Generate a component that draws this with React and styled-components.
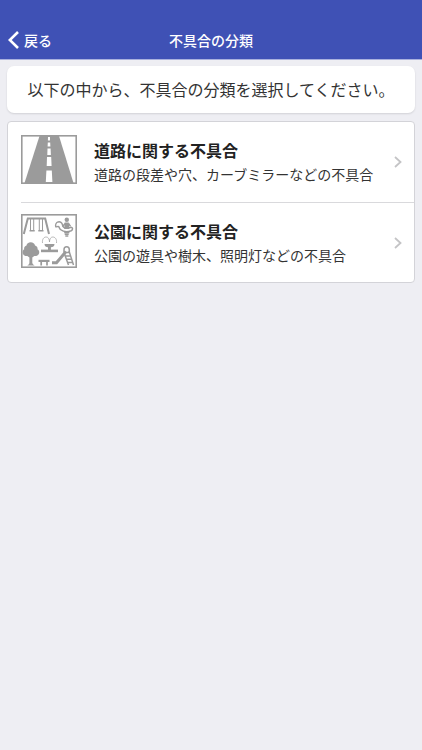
import React from 'react'
import styled, { createGlobalStyle } from 'styled-components'

const GlobalStyle = createGlobalStyle`
  * {
    box-sizing: border-box;
  }
  body {
    margin: 0;
    background: #eeeef3;
    color: #333;
    font-family: 'Noto Sans CJK JP', sans-serif;
  }
`

const categories = [
  {
    id: 'road',
    title: '道路に関する不具合',
    text: '道路の段差や穴、カーブミラーなどの不具合',
    icon: RoadIcon,
  },
  {
    id: 'park',
    title: '公園に関する不具合',
    text: '公園の遊具や樹木、照明灯などの不具合',
    icon: ParkIcon,
  },
]

function App() {
  return (
    <>
      <GlobalStyle />
      <Header>
        <BackButton type="button">
          <svg width="12" height="18" viewBox="0 0 12 18" fill="none" stroke="#fff" strokeWidth="2.6">
            <path d="M10 1 1.800 9l8.200 8" />
          </svg>
          戻る
        </BackButton>
        <HeaderTitle>不具合の分類</HeaderTitle>
      </Header>
      <Main>
        <Message>以下の中から、不具合の分類を選択してください。</Message>
        <List>
          {categories.map(({ id, title, text, icon: Icon }) => (
            <Item key={id}>
              <ItemLink href={`#${id}`}>
                <ItemIcon>
                  <Icon />
                </ItemIcon>
                <ItemBody>
                  <ItemTitle>{title}</ItemTitle>
                  <ItemText>{text}</ItemText>
                </ItemBody>
                <svg width="8" height="12" viewBox="0 0 8 12" fill="none" stroke="#c4c4c6" strokeWidth="1.8">
                  <path d="M1 1l5.5 5L1 11" />
                </svg>
              </ItemLink>
            </Item>
          ))}
        </List>
      </Main>
    </>
  )
}

function RoadIcon() {
  return (
    <svg width="56" height="49" viewBox="0 0 56 49">
      <rect x="0.8" y="0.8" width="54.4" height="47.4" fill="#fff" stroke="#9b9b9b" strokeWidth="1.6" />
      <path d="M18.5 1H38L52.500 48H3.500z" fill="#9b9b9b" />
      <path
        d="M27 2h2v3.500h-2.100zM26.800 7.500h2.400l.2 4H26.600zM26.500 13.500h3.100l.3 6.500h-3.600zM26 22h4.200l.4 9h-4.900zM25.400 35.500h5.400l.6 11.500h-6.600z"
        fill="#fff"
      />
    </svg>
  )
}

function ParkIcon() {
  return (
    <svg width="56" height="54" viewBox="0 0 56 54" fill="none" stroke="#9b9b9b">
      <rect x="0.8" y="0.8" width="54.4" height="52.4" fill="#fff" strokeWidth="1.6" />
      {/* swings */}
      <path d="M2.800 20 6.800 4.500h17.400L28 20" strokeWidth="2" />
      <path d="M9.500 5v11.500M12.700 5v11.500M18.300 5v11.500M21.500 5v11.500" strokeWidth="1" />
      <path d="M8.500 16.700h5.200M17.300 16.700h5.200" strokeWidth="1.6" />
      {/* spring rider */}
      <circle cx="45.800" cy="5.700" r="2.200" fill="#9b9b9b" stroke="none" />
      <path d="M43.600 8.600h4.200l.5 6.400h-5z" fill="#9b9b9b" stroke="none" />
      <path d="M44.300 9.400l-2.800 3M47.500 9.400l2 3" strokeWidth="1.500" />
      <path
        d="M34.800 12.800c-.6-2 .4-4.300 2.400-4.900 2-.5 3.900.8 4.200 2.800.3 2.300 2 3.500 4.200 3.500l4-.8c2.300-.4 2.600 2.500.6 3.400-3.500 1.400-8 1-10.800-1.300-1.200-1-1-2.600-2-3-.8-.4-1.600.7-2.600.3z"
        strokeWidth="1.500"
      />
      <path d="M43.200 18.400h5.200M43.700 20.200h4M44.300 22h3" strokeWidth="1.500" />
      {/* fountain */}
      <path d="M21.500 29c-.5-4 1.500-6 3.700-6 2 0 3.300 2 3.300 5 0-3 1.300-5 3.300-5 2.200 0 4.200 2 3.700 6" strokeWidth="0.7" />
      <path d="M23.500 30h10c0 2.200-1.700 3.200-3.600 3.200v3H27v-3c-2 0-3.500-1-3.500-3.200z" fill="#9b9b9b" stroke="none" />
      <path d="M20 36.900h17" strokeWidth="2.600" />
      {/* tree */}
      <path
        d="M9.700 28.300c2.300 0 3.900 1.300 4.300 3.100 2 .5 2.900 2.100 2.500 3.800 1.700 1 2.200 3 1.300 4.800-.8 1.600-2.700 2.300-4.500 2l-2 1.500v5.600c.4 1.200 1.300 1.900 2.400 2.400H6.200c1.200-.5 2-1.200 2.200-2.400v-5.600L6.300 42c-1.800.3-3.500-.4-4.300-2-.8-1.800-.3-3.800 1.200-4.800-.4-1.700.5-3.300 2.300-3.800.4-1.800 1.900-3.100 4.200-3.100z"
        fill="#9b9b9b"
        stroke="none"
      />
      {/* bench */}
      <path d="M17.500 46.900h11" strokeWidth="2.200" />
      <path d="M20.200 47v4.500M26 47v4.500" strokeWidth="1.700" />
      {/* slide */}
      <path d="M31 48.800h4.500L45 37.500" strokeWidth="3" />
      <path d="M43 38.500v-2.800c0-3.800 5.300-3.800 5.300 0v2.800" strokeWidth="1.500" />
      <path d="M48 37 52.500 51M43.500 40 47.500 51" strokeWidth="1.500" />
      <path d="M43 38.500h5.500M44.500 42h5M45.700 45.200h5M46.700 48.400h5" strokeWidth="1.500" />
    </svg>
  )
}

const Header = styled.header`
  display: grid;
  grid-template-columns: 1fr auto 1fr;
  align-items: center;
  padding: 22px 8px 2px;
  height: 60px;
  background: #3f51b5;
  border-bottom: 1px solid #a9b1de;
  color: #fff;
`

const BackButton = styled.button`
  display: flex;
  align-items: center;
  justify-self: start;
  gap: 4px;
  padding: 0;
  border: 0;
  background: none;
  color: inherit;
  font-family: inherit;
  font-size: 14px;
  font-weight: 500;
  line-height: 20px;
  cursor: pointer;
`

const HeaderTitle = styled.h1`
  margin: 0;
  font-size: 14px;
  font-weight: 500;
  line-height: 20px;
`

const Main = styled.main`
  display: flex;
  flex-direction: column;
  gap: 8px;
  padding: 6px 7px;
`

const Message = styled.p`
  margin: 0;
  padding: 11px 8px 12px;
  border-radius: 7px;
  background: #fff;
  box-shadow: 0 1px 2px rgba(0, 0, 0, 0.12);
  font-size: 16px;
  line-height: 24px;
  text-align: center;
`

const List = styled.ul`
  margin: 0;
  padding: 0 0 0 13px;
  border: 1px solid #d3d3d8;
  border-radius: 4px;
  background: #fff;
  list-style: none;
`

const Item = styled.li`
  min-height: 80px;

  & + & {
    border-top: 1px solid #d9d9dc;
  }
`

const ItemLink = styled.a`
  display: flex;
  align-items: center;
  min-height: 79px;
  padding-right: 12px;
  color: inherit;
  text-decoration: none;
`

const ItemIcon = styled.span`
  display: flex;
  padding-bottom: 4px;
`

const ItemBody = styled.div`
  flex: 1;
  min-width: 0;
  padding-left: 17px;
`

const ItemTitle = styled.h2`
  margin: 0;
  color: #222;
  font-size: 16px;
  font-weight: 700;
  line-height: 24px;
`

const ItemText = styled.p`
  margin: 0;
  font-size: 14px;
  line-height: 24px;
`

export default App
